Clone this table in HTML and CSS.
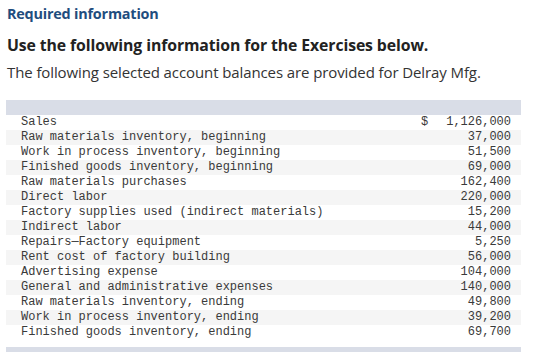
FILE: index.html
```html
<!DOCTYPE html>
<html>
<head>
<meta charset="utf-8">
<link rel="stylesheet" href="styles.css">
</head>
<body>
<div class="page">
  <div class="req">Required information</div>
  <h2 class="title">Use the following information for the Exercises below.</h2>
  <p class="intro">The following selected account balances are provided for Delray Mfg.</p>
  <div class="tbl">
    <div class="thead"></div>
    <div class="row"><span class="lbl">Sales</span><span class="cur">$</span><span class="amt">1,126,000</span></div>
    <div class="row"><span class="lbl">Raw materials inventory, beginning</span><span class="cur"></span><span class="amt">37,000</span></div>
    <div class="row"><span class="lbl">Work in process inventory, beginning</span><span class="cur"></span><span class="amt">51,500</span></div>
    <div class="row"><span class="lbl">Finished goods inventory, beginning</span><span class="cur"></span><span class="amt">69,000</span></div>
    <div class="row"><span class="lbl">Raw materials purchases</span><span class="cur"></span><span class="amt">162,400</span></div>
    <div class="row"><span class="lbl">Direct labor</span><span class="cur"></span><span class="amt">220,000</span></div>
    <div class="row"><span class="lbl">Factory supplies used (indirect materials)</span><span class="cur"></span><span class="amt">15,200</span></div>
    <div class="row"><span class="lbl">Indirect labor</span><span class="cur"></span><span class="amt">44,000</span></div>
    <div class="row"><span class="lbl">Repairs—Factory equipment</span><span class="cur"></span><span class="amt">5,250</span></div>
    <div class="row"><span class="lbl">Rent cost of factory building</span><span class="cur"></span><span class="amt">56,000</span></div>
    <div class="row"><span class="lbl">Advertising expense</span><span class="cur"></span><span class="amt">104,000</span></div>
    <div class="row"><span class="lbl">General and administrative expenses</span><span class="cur"></span><span class="amt">140,000</span></div>
    <div class="row"><span class="lbl">Raw materials inventory, ending</span><span class="cur"></span><span class="amt">49,800</span></div>
    <div class="row"><span class="lbl">Work in process inventory, ending</span><span class="cur"></span><span class="amt">39,200</span></div>
    <div class="row"><span class="lbl">Finished goods inventory, ending</span><span class="cur"></span><span class="amt">69,700</span></div>
    <div class="tfoot"></div>
  </div>
</div>
</body>
</html>
```

FILE: styles.css
```css
html, body {
  margin: 0;
  padding: 0;
  background: #ffffff;
}
.page {
  padding: 5px 0 0 7px;
  width: 515px;
  font-family: "Open Sans", "Liberation Sans", sans-serif;
}
.req {
  font-size: 14.4px;
  font-weight: 700;
  color: #1f4d7e;
  line-height: 18px;
  letter-spacing: -0.2px;
}
.title {
  margin: 11px 0 0 0;
  font-size: 15.8px;
  font-weight: 700;
  color: #222222;
  line-height: 22px;
  letter-spacing: -0.1px;
}
.intro {
  margin: 6px 0 0 0;
  font-size: 15px;
  font-weight: 400;
  color: #333333;
  line-height: 20px;
  letter-spacing: -0.1px;
}
.tbl {
  margin: 18px 0 0 -1px;
  width: 515px;
  font-family: "Liberation Mono", "DejaVu Sans Mono", monospace;
  font-size: 12px;
  color: #3a3a3a;
}
.thead {
  height: 15px;
  background: #d9dde7;
}
.row {
  display: grid;
  grid-template-columns: 1fr 22px 68px;
  height: 15px;
  line-height: 15px;
  padding: 0 10px 0 15px;
  white-space: pre;
}
.row:nth-child(odd) {
  background: #f5f5f5;
}
.amt {
  text-align: right;
}
.tfoot {
  margin-top: 7px;
  height: 5px;
  background: #d9dde7;
}
```
